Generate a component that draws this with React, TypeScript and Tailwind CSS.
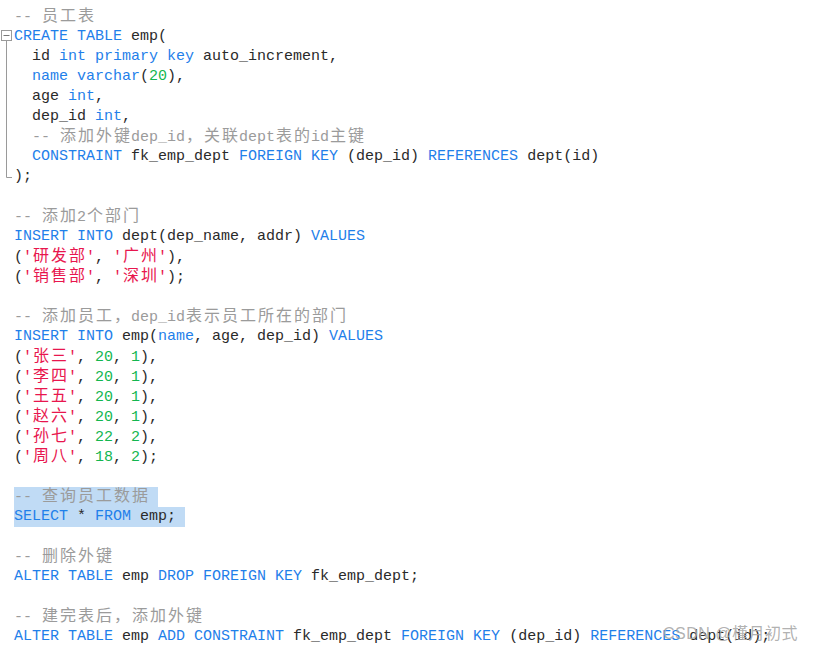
import React from "react";

type Seg = [string, string];

const K = (t: string): Seg => ["k", t];
const T = (t: string): Seg => ["t", t];
const C = (t: string): Seg => ["c", t];
const S = (t: string): Seg => ["s", t];
const N = (t: string): Seg => ["n", t];

const lines: Seg[][] = [
  [C("-- 员工表")],
  [K("CREATE TABLE"), T(" emp(")],
  [T("  id "), K("int primary key"), T(" auto_increment,")],
  [T("  "), K("name varchar"), T("("), N("20"), T("),")],
  [T("  age "), K("int"), T(",")],
  [T("  dep_id "), K("int"), T(",")],
  [C("  -- 添加外键dep_id，关联dept表的id主键")],
  [T("  "), K("CONSTRAINT"), T(" fk_emp_dept "), K("FOREIGN KEY"), T(" (dep_id) "), K("REFERENCES"), T(" dept(id)")],
  [T(");")],
  [],
  [C("-- 添加2个部门")],
  [K("INSERT INTO"), T(" dept(dep_name, addr) "), K("VALUES")],
  [T("("), S("'研发部'"), T(", "), S("'广州'"), T("),")],
  [T("("), S("'销售部'"), T(", "), S("'深圳'"), T(");")],
  [],
  [C("-- 添加员工，dep_id表示员工所在的部门")],
  [K("INSERT INTO"), T(" emp("), K("name"), T(", age, dep_id) "), K("VALUES")],
  [T("("), S("'张三'"), T(", "), N("20"), T(", "), N("1"), T("),")],
  [T("("), S("'李四'"), T(", "), N("20"), T(", "), N("1"), T("),")],
  [T("("), S("'王五'"), T(", "), N("20"), T(", "), N("1"), T("),")],
  [T("("), S("'赵六'"), T(", "), N("20"), T(", "), N("1"), T("),")],
  [T("("), S("'孙七'"), T(", "), N("22"), T(", "), N("2"), T("),")],
  [T("("), S("'周八'"), T(", "), N("18"), T(", "), N("2"), T(");")],
  [],
  [C("-- 查询员工数据 ")],
  [K("SELECT"), T(" * "), K("FROM"), T(" emp; ")],
  [],
  [C("-- 删除外键")],
  [K("ALTER TABLE"), T(" emp "), K("DROP FOREIGN KEY"), T(" fk_emp_dept;")],
  [],
  [C("-- 建完表后，添加外键")],
  [K("ALTER TABLE"), T(" emp "), K("ADD CONSTRAINT"), T(" fk_emp_dept "), K("FOREIGN KEY"), T(" (dep_id) "), K("REFERENCES"), T(" dept(id);")],
];

const colorOf: Record<string, string> = {
  k: "text-[#1f80ea]",
  t: "text-[#2a2a2a]",
  c: "text-[#9b9b9b]",
  s: "text-[#e8164e]",
  n: "text-[#14b650]",
};

function renderText(text: string) {
  const out: React.ReactNode[] = [];
  let buf = "";
  let idx = 0;
  for (const ch of Array.from(text)) {
    if (ch.charCodeAt(0) > 0x2e80) {
      if (buf) {
        out.push(<span key={idx++}>{buf}</span>);
        buf = "";
      }
      out.push(
        <span key={idx++} className="inline-block w-[18px] text-center text-[16px]">
          {ch}
        </span>
      );
    } else {
      buf += ch;
    }
  }
  if (buf) out.push(<span key={idx++}>{buf}</span>);
  return out;
}

export default function App() {
  return (
    <div className="relative w-[814px] h-[652px] overflow-hidden bg-white font-['Liberation_Mono','Noto_Sans_CJK_SC',monospace] text-[15px]">
      <div className="flex flex-col pt-[7px] pl-[14px]">
        {lines.map((segs, i) => {
          const selected = i === 24 || i === 25;
          return (
            <div key={i} className="h-[20px] leading-[20px] whitespace-pre overflow-visible">
              {segs.length > 0 && (
                <span className={"inline-block h-[20px] align-top " + (selected ? "bg-[#c0dbf5]" : "")}>
                  {segs.map((s, j) => (
                    <span key={j} className={colorOf[s[0]]}>
                      {renderText(s[1])}
                    </span>
                  ))}
                </span>
              )}
            </div>
          );
        })}
      </div>
      <svg className="absolute left-0 top-0" width="14" height="190" viewBox="0 0 14 190">
        <rect x="1.5" y="30.5" width="10" height="10" fill="white" stroke="#9a9a9a" strokeWidth="1" />
        <line x1="3.5" y1="35.5" x2="9.5" y2="35.5" stroke="#777" strokeWidth="1" />
        <line x1="6.5" y1="41" x2="6.5" y2="177.5" stroke="#9a9a9a" strokeWidth="1" />
        <line x1="6.5" y1="177.5" x2="12" y2="177.5" stroke="#9a9a9a" strokeWidth="1" />
      </svg>
      <div className="absolute left-[663px] top-[623px] text-[16px] tracking-[0.5px] leading-[22px] text-[#a8a8a8]/90 font-['Liberation_Sans','Noto_Sans_CJK_SC',sans-serif] whitespace-pre">
        CSDN @槿月初式
      </div>
    </div>
  );
}
